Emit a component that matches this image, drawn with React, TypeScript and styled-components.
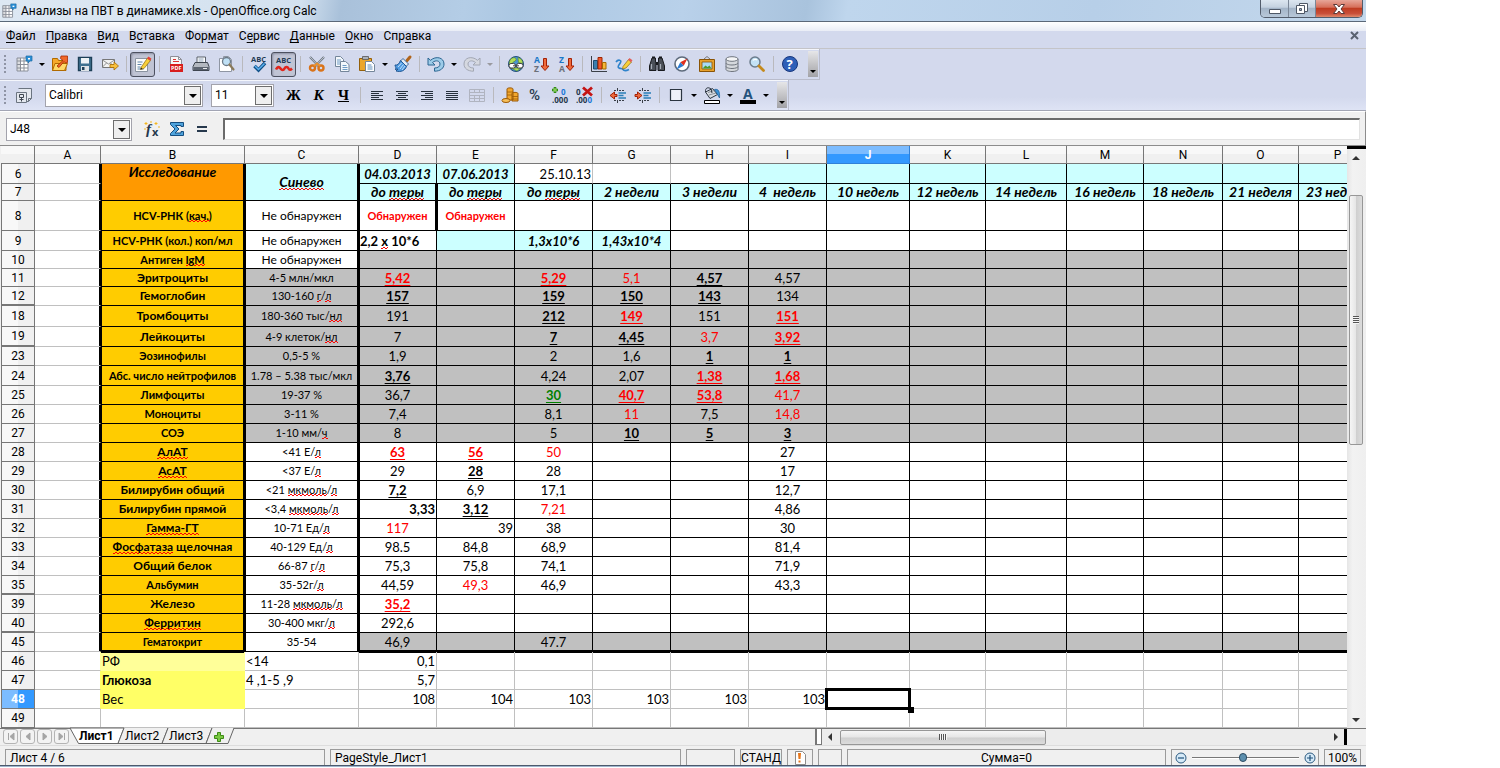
import React from "react";
import styled, { createGlobalStyle, css } from "styled-components";

const UI = `Roboto, "Open Sans", "Noto Sans", sans-serif`;
const SHEET = `Lato, "Open Sans", "Noto Sans", sans-serif`;

const GlobalStyle = createGlobalStyle`
  *, *::before, *::after { box-sizing: border-box; }
  body { margin: 0; background: #fff; overflow: hidden; }
  button, input, select { font: inherit; color: inherit; margin: 0; }
`;

/* ---------- window frame ---------- */

const Desktop = styled.div`
  padding-right: 134px;
  font: 12px/16px ${UI};
  color: #000;
`;

const Window = styled.main`
  display: flex;
  flex-direction: column;
  background: #f0f0f0;
`;

const TitleBar = styled.header`
  display: flex;
  align-items: flex-start;
  justify-content: space-between;
  height: 22px;
  padding-right: 3px;
  background: linear-gradient(100deg, #dde8f3 0%, #d3e1ef 22%, #a9c1da 25%, #b4cde6 34%, #abc7e2 38%, #b9d1ea 50%, #a9c3dd 59%, #bfd6ed 62%, #b7cfe8 80%, #c4d8ec 100%);
  border-bottom: 1px solid #5b6878;
`;

const TitleText = styled.h1`
  display: flex;
  align-items: center;
  gap: 4px;
  margin: 0;
  padding: 0 1px;
  height: 21px;
  font: 12px/20px ${UI};
`;

const Controls = styled.div`
  display: flex;
  height: 18px;
  border: 1px solid #525c6b;
  border-top: 0;
  border-radius: 0 0 5px 5px;
  overflow: hidden;
`;

const ControlButton = styled.button<{ $close?: boolean }>`
  display: flex;
  align-items: center;
  justify-content: center;
  width: ${(p) => (p.$close ? 47 : 27)}px;
  padding: 0;
  border: 0;
  border-left: 1px solid #7b8797;
  background: ${(p) =>
    p.$close
      ? "linear-gradient(#e7a699 0%, #d6705b 42%, #bf3c22 50%, #c9503a 80%, #e08a6c 100%)"
      : "linear-gradient(#dce6f0 0%, #c5d2e0 42%, #a4b5c8 50%, #b8c8d9 100%)"};
  &:first-child { border-left: 0; }
`;

const MenuBar = styled.nav`
  display: flex;
  align-items: center;
  gap: 10px;
  height: 27px;
  padding: 1px 7px 0 6px;
  background: linear-gradient(#fff 0, #e9edf6 9px, #d3d9ed 9px);
  border-bottom: 1px solid #c4c4c8;
`;

const MenuItem = styled.button`
  padding: 0;
  border: 0;
  background: none;
  line-height: 16px;
  u {
    text-underline-offset: 2px;
    text-decoration-skip-ink: none;
  }
`;

const CloseDoc = styled.button`
  display: flex;
  margin-left: auto;
  padding: 0;
  border: 0;
  background: none;
`;

/* ---------- toolbars ---------- */

const ToolArea = styled.div`
  background: linear-gradient(#d3d9ed 0, #d3d9ed 48px, #dfe4f5 62px);
  border-bottom: 1px solid #a2a5b4;
`;

const ToolRow = styled.div`
  display: flex;
  align-items: center;
  width: fit-content;
  height: 31px;
  padding: 0 1px 0 0;
  border-bottom: 1px solid #b9bccb;
  border-right: 1px solid #b9bccb;
  box-shadow: inset 0 1px #f4f6fc;
  &:last-child { border-bottom: 0; height: 30px; }
`;

const Grip = styled.span`
  width: 11px;
  height: 19px;
  background: radial-gradient(circle at 1px 1px, #8f94a5 1px, transparent 1px) 4px 0 / 8px 4px repeat-y;
`;

const ToolButton = styled.button<{ $on?: boolean }>`
  display: flex;
  align-items: center;
  justify-content: center;
  width: 25px;
  height: 25px;
  padding: 0;
  border: 1px solid transparent;
  background: none;
  svg { overflow: visible; }
  ${(p) =>
    p.$on &&
    css`
      border: 1px solid #4d5160;
      border-radius: 3px;
      background: #c0c4d4;
      box-shadow: inset 1px 1px 2px #8d92a5;
    `}
`;

const Drop = styled.button<{ $off?: boolean }>`
  display: flex;
  align-items: center;
  justify-content: center;
  width: 11px;
  height: 25px;
  padding: 0;
  border: 0;
  background: none;
  &::after {
    content: "";
    border: 3px solid transparent;
    border-top-color: ${(p) => (p.$off ? "#9a9a9f" : "#000")};
    border-bottom: 0;
  }
`;

const Sep = styled.span`
  width: 8px;
  height: 16px;
  background: linear-gradient(#b9b9bd, #b9b9bd) center / 1px 100% no-repeat;
`;

const Overflow = styled.button`
  display: flex;
  align-items: flex-end;
  justify-content: center;
  width: 10px;
  height: 26px;
  margin-left: 6px;
  padding: 0 0 4px;
  border: 0;
  background: linear-gradient(#e6e6e8, #a2a2a6);
  &::after {
    content: "";
    border: 3px solid transparent;
    border-top-color: #000;
    border-bottom: 0;
  }
`;

const FormatGroup = styled.div`
  display: flex;
  align-items: center;
  margin-left: 7px;
`;

const Combo = styled.label<{ $w: number; $gap?: number }>`
  display: flex;
  position: relative;
  width: ${(p) => p.$w}px;
  height: 23px;
  margin-left: ${(p) => p.$gap ?? 0}px;
  border: 1px solid #a3a3ac;
  background: #fff;
  &::before {
    content: "";
    position: absolute;
    right: 1px;
    top: 1px;
    width: 17px;
    height: 19px;
    border: 1px solid #6e6e6e;
    background: #efefef;
    pointer-events: none;
  }
  &::after {
    content: "";
    position: absolute;
    right: 5px;
    top: 9px;
    border: 4px solid transparent;
    border-top-color: #000;
    border-bottom: 0;
    pointer-events: none;
  }
`;

const ComboSelect = styled.select`
  width: 100%;
  padding: 0 3px;
  border: 0;
  background: none;
  appearance: none;
`;

const Letter = styled.span<{ $italic?: boolean; $line?: boolean }>`
  font: ${(p) => (p.$italic ? "italic " : "")}bold 15px/18px "Liberation Serif", serif;
  ${(p) => p.$line && "text-decoration: underline;"}
`;

/* ---------- formula bar ---------- */

const FormulaBar = styled.div`
  display: flex;
  align-items: center;
  height: 34px;
  padding: 1px 5px 0 6px;
  border-top: 1px solid #fff;
  border-right: 1px solid #8c8c8c;
  background: #f0f0f0;
`;

const FormulaTools = styled.div`
  display: flex;
  padding: 0 9px 0 7px;
`;

const FormulaInput = styled.input`
  flex: 1;
  min-width: 0;
  height: 22px;
  padding: 0 4px;
  border: 1px solid #e2e2e2;
  border-top: 2px solid #6b6b6b;
  border-left: 2px solid #6b6b6b;
  border-radius: 0;
  background: #fff;
`;

/* ---------- sheet ---------- */

const SheetArea = styled.section`
  display: flex;
  padding-left: 1px;
  border-top: 1px solid #8c8c8c;
`;

const Viewport = styled.div`
  flex: 1;
  min-width: 0;
  overflow: hidden;
  background: #fff;
`;

const Grid = styled.table`
  table-layout: fixed;
  width: 1376px;
  border-collapse: separate;
  border-spacing: 0;
  font: 13px/16px ${SHEET};
`;

const ColHead = styled.th<{ $active?: boolean }>`
  height: 18px;
  padding: 1px 0 0;
  border-right: 1px solid ${(p) => (p.$active ? "#2f80d8" : "#777")};
  border-bottom: 1px solid ${(p) => (p.$active ? "#2f80d8" : "#777")};
  background: ${(p) =>
    p.$active ? "linear-gradient(#7cbcff 50%, #3399ff 50%)" : "linear-gradient(#f8f8f8 50%, #f0f0f0 50%)"};
  color: ${(p) => (p.$active ? "#fff" : "#000")};
  font: ${(p) => (p.$active ? 700 : 400)} 12px/16px ${UI};
`;

const RowHead = styled.th<{ $active?: boolean; $gap?: boolean }>`
  padding: 0;
  border-left: 1px solid #777;
  border-right: 1px solid #777;
  border-bottom: ${(p) => (p.$gap ? 2 : 1)}px solid #777;
  background: ${(p) =>
    p.$active
      ? "linear-gradient(90deg, #7cbcff 50%, #3399ff 50%)"
      : "linear-gradient(90deg, #f8f8f8 50%, #f0f0f0 50%)"};
  color: ${(p) => (p.$active ? "#fff" : "#000")};
  font: ${(p) => (p.$active ? 700 : 400)} 12px/16px ${UI};
`;

const insets: Record<string, string> = {
  t: "inset 0 1px #000",
  r: "inset -1px 0 #000",
  b: "inset 0 -1px #000",
  l: "inset 1px 0 #000",
};

interface CellProps {
  $bg?: string;
  $right?: string;
  $bottom?: string;
  $thick?: string;
  $align?: string;
  $size?: number;
  $color?: string;
  $bold?: boolean;
  $italic?: boolean;
  $under?: boolean;
  $top?: boolean;
}

const Cell = styled.td<CellProps>`
  padding: 0 1px;
  overflow: hidden;
  white-space: pre;
  vertical-align: ${(p) => (p.$top ? "top" : "middle")};
  text-align: ${(p) => p.$align ?? "center"};
  border-right: 1px solid ${(p) => p.$right ?? "#c0c0c0"};
  border-bottom: 1px solid ${(p) => p.$bottom ?? "#c0c0c0"};
  background: ${(p) => p.$bg ?? "#fff"};
  color: ${(p) => p.$color ?? "#000"};
  font-size: ${(p) => p.$size ?? 13}px;
  font-weight: ${(p) => (p.$bold ? 700 : 400)};
  font-style: ${(p) => (p.$italic ? "italic" : "normal")};
  ${(p) => p.$under && "text-decoration: underline; text-underline-offset: 2px; text-decoration-skip-ink: none;"}
  ${(p) => p.$thick && `box-shadow: ${p.$thick.split("").map((k) => insets[k]).join(", ")};`}
`;

const ActiveCell = styled(Cell)`
  position: relative;
  overflow: visible;
`;

const Cursor = styled.span`
  position: absolute;
  inset: -2px;
  border: 3px solid #000;
  &::after {
    content: "";
    position: absolute;
    right: -6px;
    bottom: -6px;
    width: 6px;
    height: 6px;
    background: #000;
  }
`;

const Misspelt = styled.span`
  background:
    linear-gradient(90deg, #f00 50%, transparent 50%) 0 100% / 4px 1px repeat-x,
    linear-gradient(90deg, transparent 50%, #f00 50%) 0 calc(100% - 1px) / 4px 1px repeat-x;
`;

/* ---------- scroll bars, tabs, status ---------- */

const VScroll = styled.div`
  display: flex;
  flex-direction: column;
  align-items: center;
  width: 19px;
  padding: 0 1px 0 0;
  border-top: 3px solid #000;
  background: linear-gradient(90deg, #e6e6e6, #f2f2f2 30%, #efefef);
`;

const ScrollArrow = styled.button<{ $dir: "up" | "down" | "left" | "right" }>`
  display: flex;
  align-items: center;
  justify-content: center;
  width: 16px;
  height: 17px;
  padding: 0;
  border: 0;
  background: none;
  &::after {
    content: "";
    border: 4px solid transparent;
    ${(p) => p.$dir === "up" && "border-bottom-color: #333; border-top: 0;"}
    ${(p) => p.$dir === "down" && "border-top-color: #333; border-bottom: 0;"}
    ${(p) => p.$dir === "left" && "border-right-color: #333; border-left: 0;"}
    ${(p) => p.$dir === "right" && "border-left-color: #333; border-right: 0;"}
  }
`;

const VTrack = styled.div`
  flex: 1;
  width: 14px;
  padding-top: 29px;
`;

const Thumb = styled.div<{ $v?: boolean }>`
  display: flex;
  align-items: center;
  justify-content: center;
  width: ${(p) => (p.$v ? "14px" : "206px")};
  height: ${(p) => (p.$v ? "250px" : "15px")};
  border: 1px solid #979797;
  border-radius: 2px;
  background: linear-gradient(${(p) => (p.$v ? "90deg" : "180deg")}, #f5f5f5, #e6e6e6 48%, #cfcfcf 52%, #dcdcdc);
  &::after {
    content: "";
    width: ${(p) => (p.$v ? 6 : 8)}px;
    height: ${(p) => (p.$v ? 8 : 6)}px;
    background: repeating-linear-gradient(${(p) => (p.$v ? "180deg" : "90deg")}, #555 0 1px, #f5f5f5 1px 2px);
  }
`;

const TabBar = styled.div`
  display: flex;
  height: 18px;
  padding-right: 19px;
  border-top: 1px solid #777;
  border-bottom: 1px solid #ddd;
`;

const TabZone = styled.div`
  display: flex;
  align-items: flex-start;
  width: 815px;
  padding-left: 3px;
`;

const NavButton = styled.button`
  display: flex;
  align-items: center;
  justify-content: center;
  width: 15px;
  height: 15px;
  margin-right: 2px;
  padding: 0;
  border: 1px solid #b4b4b4;
  border-radius: 3px;
  background: #f3f3f3;
`;

const Tabs = styled.div`
  display: flex;
  padding-left: 1px;
`;

const Tab = styled.button<{ $active?: boolean; $w: number }>`
  position: relative;
  width: ${(p) => p.$w}px;
  height: 16px;
  padding: 0 0 1px 7px;
  border: 0;
  background: none;
  text-align: left;
  font: ${(p) => (p.$active ? 700 : 400)} 12px/15px ${UI};
`;

const TabShape = styled.svg`
  position: absolute;
  left: 0;
  top: -1px;
  overflow: visible;
`;

const TabLabel = styled.span`
  display: flex;
  align-items: center;
  position: relative;
  height: 15px;
`;

const Splitter = styled.div`
  width: 7px;
  border: 1px solid #777;
  border-top: 0;
  border-left-width: 2px;
  background: #fff;
`;

const HScroll = styled.div`
  display: flex;
  flex: 1;
  align-items: center;
  border-right: 3px solid #000;
  background: #ececec;
`;

const HTrack = styled.div`
  flex: 1;
  padding-left: 2px;
`;

const StatusBar = styled.footer`
  display: flex;
  gap: 5px;
  height: 20px;
  padding: 3px 5px 0;
  border-bottom: 1px solid #4c5a6c;
`;

const StatusCell = styled.div<{ $w?: number; $pad?: number }>`
  display: flex;
  align-items: center;
  justify-content: ${(p) => (p.$pad ? "flex-start" : "center")};
  ${(p) => (p.$w ? `flex: none; width: ${p.$w}px;` : "flex: 1; min-width: 0;")}
  padding-left: ${(p) => p.$pad ?? 0}px;
  border: 1px solid #9b9b9b;
  border-bottom: 0;
  white-space: nowrap;
`;

const ZoomButton = styled.button`
  display: flex;
  padding: 0;
  border: 0;
  background: none;
`;

const ZoomRange = styled.input`
  width: 107px;
  height: 14px;
  margin: 0 5px;
  appearance: none;
  background: linear-gradient(#777 50%, #fff 50%) center / 100% 2px no-repeat;
  &::-webkit-slider-thumb {
    appearance: none;
    width: 8px;
    height: 9px;
    border: 1px solid #2a4a62;
    border-radius: 4px;
    background: #5c8fae;
  }
`;

const TaskbarEdge = styled.div`
  height: 1px;
  background: #9fb4cc;
`;

/* ---------- icons ---------- */

const icon = (children: React.ReactNode, size = 18) => (
  <svg width={size} height={size} viewBox="0 0 18 18" fill="none" aria-hidden="true">
    {children}
  </svg>
);
const iconFont = { fontFamily: "Open Sans, sans-serif", fontWeight: 700 } as const;

const SheetArt = (
  <>
    <path d="M2 3h11v13H2z" fill="#fff" stroke="#8a8f99" />
    <path d="M2 6h11M2 9.500h11M2 13h11M5.500 3v13M9 3v13" stroke="#8a8f99" />
    <path d="M2 3h4v13H2z" fill="#8a8f99" fillOpacity=".3" />
    <path d="M11 1h6v5h-2l-2 2V6h-2z" fill="#2b8fd6" stroke="#1d6ba5" strokeWidth=".7" />
    <path d="M13 3h2v1.500h-2z" fill="#fff" />
  </>
);
const SheetIcon = icon(SheetArt);
const OpenIcon = icon(
  <>
    <path d="M1.500 15.500v-12h5l1 2H15v10z" fill="#f7a92b" stroke="#b06a00" />
    <path d="M1.500 15.500 4 8.500h12.500l-3 7z" fill="#ffd968" stroke="#b06a00" />
    <path d="M6 11 12 5.500 9.500 3.500 10 1h6.500v6.500l-2 .5-1.500-1.500L8 12.500z" fill="#f0682a" stroke="#a82a00" strokeWidth=".8" />
  </>
);
const SaveIcon = icon(
  <>
    <path d="M2.500 2.500h13v13h-13z" fill="#3f718f" stroke="#1d3f57" strokeWidth="1.400" />
    <path d="M5 3h8v5.500H5z" fill="#eef3f6" />
    <path d="M5 11h8v5H5z" fill="#dfe4e8" />
    <path d="M6 12h2.500v3H6z" fill="#1d3f57" />
  </>
);
const MailIcon = icon(
  <>
    <path d="M1.500 4.500h12v8h-12z" fill="#f3f3f3" stroke="#777" />
    <path d="m1.500 5 6 4 6-4M1.500 12l4-4M13.500 12l-4-4" stroke="#777" strokeWidth=".8" />
    <path d="M9 9.500h4V7l4.500 4-4.500 4v-2.500H9z" fill="#f9c03c" stroke="#a66a00" strokeWidth=".8" />
  </>
);
const EditIcon = icon(
  <>
    <path d="M1.500 3.500h12v13h-12z" fill="#fbfbfb" stroke="#8a93a0" />
    <path d="M3.500 7h5M3.500 9.500h4M3.500 12h3M3.500 14h6" stroke="#5c84a8" />
    <path d="M7 12.500 13.500 3l3 2.500-6.500 8-3.500 1z" fill="#f8cf3a" stroke="#8a6a10" strokeWidth=".7" />
    <path d="m13 3.500 1.500-2 3 2.200-1.400 2z" fill="#e2403a" />
    <path d="m6.600 14.400.4-1.800 1.600 1.200z" fill="#222" />
  </>
);
const PdfIcon = icon(
  <>
    <path d="M3.500 1.500h8l3 3v12h-11z" fill="#f8f8f8" stroke="#8f8f96" />
    <path d="M11.500 1.500v3h3" stroke="#8f8f96" />
    <path d="M6 4.500h3M6 6.500h6" stroke="#d33" />
    <path d="M3 9h13v8H3z" fill="#d81e1e" />
    <text x="4" y="15" fontSize="5.500" fill="#fff" {...iconFont}>PDF</text>
  </>
);
const PrintIcon = icon(
  <>
    <path d="M5 8V2h8.500v6z" fill="#fff" stroke="#59606b" />
    <path d="M6.500 4h5M6.500 6h5" stroke="#8fa3b8" />
    <path d="M3 7.500h12.500l1.500 4v4H1v-4z" fill="#b3b8c0" stroke="#3f4650" />
    <path d="M1.500 12h15v3h-15z" fill="#5c6470" />
    <path d="M11 13.500h4" stroke="#e8eaed" />
  </>
);
const PreviewIcon = icon(
  <>
    <path d="M2.500 3.500h4v-2h5l3 3v12h-12z" fill="#fff" stroke="#8f96a3" />
    <circle cx="9.500" cy="6.500" r="4" fill="#bfe0f5" stroke="#6c7a88" strokeWidth="1.300" />
    <path d="m12.500 9.500 4 5" stroke="#8a7a5a" strokeWidth="2.200" strokeLinecap="round" />
  </>
);
const AbcText = <text x="1" y="7" fontSize="7.500" fill="#243b55" {...iconFont}>ABC</text>;
const SpellIcon = icon(
  <>
    {AbcText}
    <path d="m4.500 11 4 4 6.500-7" stroke="#0f4f86" strokeWidth="3.500" />
    <path d="m5 11 3.500 3.500L14.500 8.500" stroke="#5bb0ee" strokeWidth="1.500" />
  </>
);
const AutoSpellIcon = icon(
  <>
    <g transform="translate(0 1)">{AbcText}</g>
    <path d="M1 14.500c1.500-3 3-3 4.500-1s3 2 4 0 3-2 4 0 2 1.500 3.500 0" stroke="#e0261c" strokeWidth="2.600" />
  </>
);
const CutIcon = icon(
  <>
    <path d="m2 2 9.500 10M16 2 6.500 12" stroke="#6b7480" strokeWidth="2.200" />
    <path d="m2 2 9 9.500M16 2 7 11.500" stroke="#d5dae0" strokeWidth=".8" />
    <circle cx="4.500" cy="13" r="2.500" stroke="#d9731a" strokeWidth="2.400" />
    <circle cx="13" cy="13" r="2.500" stroke="#d9731a" strokeWidth="2.400" />
    <path d="m6 11 3-2.500 3 2.500" stroke="#e8902e" strokeWidth="2" />
  </>
);
const CopyIcon = icon(
  <>
    <path d="M2.500 1.500h5l3 3v7h-8z" fill="#f4f8fc" stroke="#74869a" />
    <path d="M4 5h4M4 7h3M4 9h3" stroke="#6f9cc4" />
    <path d="M7.500 6.500h5l3.500 3v7H7.500z" fill="#f4f8fc" stroke="#74869a" />
    <path d="M9.500 10.500h4M9.500 12.500h5M9.500 14.500h5" stroke="#6f9cc4" />
  </>
);
const PasteIcon = icon(
  <>
    <path d="M1.500 3.500h12v12h-12z" fill="#eba62c" stroke="#94600a" />
    <path d="M4.500 1.500h6v3h-6z" fill="#aab1ba" stroke="#555" strokeWidth=".8" />
    <path d="M7.500 6.500h6l3 3v7h-9z" fill="#fff" stroke="#74869a" />
    <path d="M9.500 10h4M9.500 12h5M9.500 14h5" stroke="#5c8dbc" />
  </>
);
const BrushIcon = icon(
  <>
    <path d="m16 2-3 3.500" stroke="#b0641a" strokeWidth="3" strokeLinecap="round" />
    <path d="m9 3.500 5.500 5.500-2.500 2.500L6.500 6z" fill="#e4ebf3" stroke="#2c5a8c" strokeWidth=".9" />
    <path d="M6.500 5.500 12.500 11.500C11 15.500 7 17.500 2 16l2-2-3 .5c2-1.500 0-2.500 0-4.500 2.500.5 4-1 5.500-4.500z" fill="#4f9ae0" stroke="#174f8c" strokeWidth=".9" />
    <path d="M7.500 8 4 12M9.500 9.500 6 14M11 11l-3 4" stroke="#cfe6fa" strokeWidth=".9" />
  </>
);
const undoPath = "M1 3v7h7L5.500 7.500C9 4.500 13 6 13 9c0 2.500-2 4-5.500 4v3.200c6 0 9.500-3 9.500-7.200C17 2.500 9 .5 3.500 5.300z";
const UndoIcon = icon(<path d={undoPath} fill="#9ccbe8" stroke="#2a6591" />);
const RedoIcon = icon(
  <g transform="matrix(-1 0 0 1 18 0)">
    <path d={undoPath} fill="#d5d8e0" stroke="#a2a7b3" />
  </g>
);
const GlobeIcon = icon(
  <>
    <circle cx="9" cy="9" r="7.500" fill="#4b93d1" stroke="#264f7c" />
    <path d="M3 5c3-4 7-2 6 0s-3 1-4 4-2 1-3 0zM11 2.500c3 1 5 3 4.500 6l-4-1zM4 13h10l-4 3z" fill="#b4dc5a" stroke="#3f7a1d" strokeWidth=".5" />
    <rect x="2" y="8.500" width="6.500" height="4.500" rx="2" fill="#fff" stroke="#444" />
    <rect x="9.500" y="8.500" width="6.500" height="4.500" rx="2" fill="#fff" stroke="#444" />
    <path d="M6 10.800h6" stroke="#444" />
  </>
);
const sortIcon = (a: string, b: string) =>
  icon(
    <>
      <text x="2" y="8" fontSize="8.500" fill="#1a78c8" {...iconFont}>{a}</text>
      <text x="2" y="17" fontSize="8.500" fill="#6c7079" {...iconFont}>{b}</text>
      <path d="M11.500 3.500h3V11H17l-4 4.500L9 11h2.500z" fill="#ee6a3c" stroke="#a32106" />
    </>
  );
const ChartIcon = icon(
  <>
    <path d="M1.500 1v15.500H17" stroke="#3a3f48" />
    <path d="M3.500 5.500h4V14h-4z" fill="#3b7fae" stroke="#1b4d73" />
    <path d="M8 2.500h4V14H8z" fill="#f0582a" stroke="#9d2400" />
    <path d="M12.500 7.500h3.500V14h-3.500z" fill="#f7b63a" stroke="#a66a00" />
  </>
);
const DrawIcon = icon(
  <>
    <path d="M1 7c2-3 6-2 4.500.5S2 12 4 13s3 0 4 1.500 4 1 6 0" stroke="#2e83cc" strokeWidth="1.600" />
    <path d="M8 11.500 13.500 4.500l3 2.500-5.500 6-3.500 1z" fill="#f8cf3a" stroke="#8a6a10" strokeWidth=".7" />
    <path d="m13 5 1.500-2 3 2.200-1.400 2z" fill="#e2605a" />
  </>
);
const FindIcon = icon(
  <>
    <path d="M4 3h3.500v3L8 9v6.500H1.500V11zM14 3h-3.500v3L10 9v6.500h6.500V11z" fill="#4a4f58" stroke="#17191d" />
    <path d="M4 1.500h3V3H4zM11 1.500h3V3h-3zM8 7h2v3H8z" fill="#17191d" />
    <path d="M3.500 9v5M12.500 9v5" stroke="#a7adb8" strokeWidth="1.200" />
  </>
);
const CompassIcon = icon(
  <>
    <circle cx="9" cy="9" r="7" fill="#fff" stroke="#5e6b7c" strokeWidth="1.600" />
    <path d="m14.500 3.500-3.800 7.200-3.400-3.400z" fill="#e0301e" />
    <path d="m3.500 14.500 7.200-3.800-3.400-3.400z" fill="#2b7ad0" />
  </>
);
const GalleryIcon = icon(
  <>
    <path d="m6 4 3-2.500L12 4" stroke="#777" />
    <path d="M1.500 4.500h15v12h-15z" fill="#e7a12c" stroke="#8a5406" />
    <path d="M4 7h10v7H4z" fill="#a8daf5" stroke="#8a5406" strokeWidth=".8" />
    <path d="m4.500 13.500 3-3 2 1.500 2-1.500 2 3z" fill="#4c9a2a" />
  </>
);
const DatabaseIcon = icon(
  <>
    <path d="M3 4v10.500c0 1 2.700 2 6 2s6-1 6-2V4z" fill="#d6d9dd" stroke="#6f757e" />
    <ellipse cx="9" cy="4" rx="6" ry="2.300" fill="#f4f5f6" stroke="#6f757e" />
    <path d="M3 8c0 1 2.700 2 6 2s6-1 6-2M3 11.500c0 1 2.700 2 6 2s6-1 6-2" stroke="#6f757e" />
  </>
);
const LensIcon = icon(
  <>
    <circle cx="7" cy="7" r="5" fill="#c3e2f5" stroke="#6b7c8c" strokeWidth="1.500" />
    <path d="M5 5.500c1-1.500 3-1.500 4-.5" stroke="#fff" strokeWidth="1.200" />
    <path d="m11 11 4.500 4.500" stroke="#c48a1c" strokeWidth="2.800" strokeLinecap="round" />
  </>
);
const HelpIcon = icon(
  <>
    <circle cx="9" cy="9" r="7.500" fill="#2e5fb8" stroke="#17367c" />
    <text x="5.500" y="14" fontSize="13" fill="#fff" {...iconFont}>?</text>
  </>
);
const StylesIcon = icon(
  <>
    <path d="M3.500 2.500h13v10l-3 3h-4" fill="#e4e8ef" stroke="#6b7480" />
    <path d="M16.500 12.500h-3v3" stroke="#6b7480" />
    <path d="M1.500 6.500h10v10h-10z" fill="#e4e8ef" stroke="#6b7480" />
    <path d="M4.500 8.500h4v3h-4zM6.500 11.500v4M4.500 13.500h4" stroke="#3f4650" />
  </>
);
const linesIcon = (rows: [number, number][]) =>
  icon(
    <g stroke="#26303c">
      {rows.map(([a, b], i) => (
        <path key={i} d={`M${a} ${5.5 + i * 2}H${b}`} />
      ))}
    </g>
  );
const AlignLeft = linesIcon([[3, 15], [3, 11], [3, 15], [3, 11], [3, 15]]);
const AlignCenter = linesIcon([[3, 15], [5, 13], [3, 15], [5, 13], [3, 15]]);
const AlignRight = linesIcon([[3, 15], [7, 15], [3, 15], [7, 15], [3, 15]]);
const AlignJustify = linesIcon([[3, 15], [3, 15], [3, 15], [3, 15], [3, 15]]);
const MergeIcon = icon(
  <path d="M1.500 3.500h15v12h-15zM1.500 6.500h15M1.500 9.500h15M1.500 12.500h15M6.500 3.500v3M11.500 3.500v3M6.500 9.500v6M11.500 9.500v6" stroke="#b0b4c0" />
);
const CoinsIcon = icon(
  <>
    <path d="M6 3c0-1.500 6-1.500 6 0v11H6zM11 7.500c0-1.500 6-1.500 6 0V15h-6z" fill="#f2a72e" stroke="#9c5a06" />
    <path d="M6 6h6M6 9h5M11 10.500h6M11 13h6" stroke="#9c5a06" strokeWidth=".8" />
    <ellipse cx="5" cy="14.500" rx="4" ry="2" fill="#f7c05a" stroke="#9c5a06" />
  </>
);
const PercentIcon = icon(
  <text x="3" y="14" fontSize="15" fill="#26384c" fontFamily="Roboto, sans-serif" fontWeight={500}>%</text>
);
const AddDecimalIcon = icon(
  <>
    <path d="M4 1v6M1 4h6" stroke="#2f8a14" strokeWidth="2.600" />
    <path d="M4 2v4M2 4h4" stroke="#a4e36c" strokeWidth="1" />
    <text x="10" y="9" fontSize="8" fill="#1a78d8" {...iconFont}>0</text>
    <text x="1" y="17" fontSize="8" fill="#26384c" {...iconFont}>.000</text>
  </>
);
const DelDecimalIcon = icon(
  <>
    <text x="0" y="9" fontSize="8" fill="#26384c" {...iconFont}>0</text>
    <text x="0" y="17" fontSize="8" fill="#26384c" {...iconFont}>.00<tspan fill="#1a78d8">0</tspan></text>
    <path d="m7 1.500 9 8M16 1.500l-9 8" stroke="#c41414" strokeWidth="2.800" />
  </>
);
const indentIcon = (flip: boolean) =>
  icon(
    <>
      <path d="M5 4.500h3M10 4.500h6M5 14.500h3M10 14.500h6" stroke="#3a3f48" strokeDasharray="2 1" />
      <path d="M9.500 7h7.500M9.500 9.500h5M9.500 12h7.500" stroke="#2a7fb8" strokeWidth="1.500" />
      <path d="M8.500 2v3M8.500 14v3" stroke="#3a3f48" />
      <path
        d={flip ? "M1 8.500h2.500V6L8 9.500l-4.500 3.500v-2.500H1z" : "M8 8.500H5.500V6L1 9.500l4.500 3.500v-2.500H8z"}
        fill="#ee6a3c"
        stroke="#a32106"
      />
    </>
  );
const BorderIcon = icon(<path d="M3.500 3.500h11v11h-11z" fill="#eef1f8" stroke="#2b3540" strokeWidth="1.200" />);
const FillIcon = icon(
  <>
    <path d="m2.500 6 7-3.500 5 6L7 12.500z" fill="#d9dde2" stroke="#2b3540" />
    <path d="m5 6.500 6-2M6 9l7-2" stroke="#8b929b" />
    <path d="M2.500 6C2 2 5 .5 8 3l1 4" stroke="#2b3540" />
    <path d="M11.500 3.500c4-1 5.500 2 5 8.500l-2-3.500z" fill="#3b93d8" stroke="#1c5c94" strokeWidth=".7" />
    <path d="M1.500 14.500h15v3h-15z" fill="#fff" stroke="#000" />
  </>
);
const FontColorIcon = icon(
  <>
    <text x="4" y="13" fontSize="14" fill="#24527c" {...iconFont}>A</text>
    <path d="M1 14h16v4H1z" fill="#000" />
  </>
);
const FxIcon = icon(
  <>
    <text x="3" y="14" fontSize="15" fill="#26384c" fontFamily="Liberation Serif, serif" fontStyle="italic" fontWeight={700}>f</text>
    <text x="9" y="16" fontSize="11" fill="#26384c" {...iconFont}>x</text>
    <path d="M3 2v3M1.500 3.500h3M8 1v2M13 2v3M11.500 3.500h3M2 8v2M16 6v2" stroke="#f5b820" />
  </>
);
const SumIcon = icon(
  <path d="M2.500 2.500h13v4h-2.500V5.500H7.500L11 9l-4 4h6v-1.500h2.500v4h-13v-2L7 9 2.500 4.500z" fill="#4fa3dc" stroke="#154e80" />
);
const EqualsIcon = icon(<path d="M4 7h10M4 11h10" stroke="#26384c" strokeWidth="2" />);

/* ---------- sheet data ---------- */

const CYAN = "#ccffff";
const GREY = "#c0c0c0";
const columns: [string, number][] = [
  ["A", 66], ["B", 144], ["C", 114], ["D", 78], ["E", 78], ["F", 78], ["G", 78], ["H", 78],
  ["I", 78], ["J", 83], ["K", 76], ["L", 81], ["M", 77], ["N", 79], ["O", 76], ["P", 78],
];

/* A value is "text" or "text|flags": b bold, u underline, i italic, r red, g green, R right, L left, s small, m medium.
   Words between ~ marks carry the spelling wave. */
interface Row {
  n: number;
  h: number;
  label: string;
  norm: string;
  vals: string[];
  small?: boolean;
  bg?: string;
  normBg?: string;
  gap?: boolean;
}

const ROWS: Row[] = [
  { n: 6, h: 20, label: "", norm: "", vals: ["04.03.2013|bi", "07.06.2013|bi", "25.10.13|R"] },
  {
    n: 7, h: 17, label: "", norm: "", bg: CYAN,
    vals: ["до ~теры~|bim", "до ~теры~|bim", "до ~теры~|bim", "2 недели|bim", "3 недели|bim", "4  недель|bim", "10 недель|bim",
      "12 недель|bim", "14 недель|bim", "16 недель|bim", "18 недель|bim", "21 неделя|bim", "23 неделя|bim"],
  },
  { n: 8, h: 30, label: "HCV-РНК (~кач.~)", norm: "Не обнаружен", vals: ["Обнаружен|brs", "Обнаружен|brs"], small: true },
  { n: 9, h: 20, label: "HCV-РНК (кол.) коп/мл", norm: "Не обнаружен", vals: ["2,2 ~x~ 10*6|bL", "", "1,3x10*6|bi", "1,43x10*4|bi"], small: true },
  { n: 10, h: 18, label: "Антиген ~IgM~", norm: "Не обнаружен", vals: [], bg: GREY, small: true },
  { n: 11, h: 18, label: "Эритроциты", norm: "4-5 млн/мкл", vals: ["5,42|bur", "", "5,29|bur", "5,1|r", "4,57|bu", "4,57"], bg: GREY, normBg: GREY },
  { n: 12, h: 19, label: "Гемоглобин", norm: "130-160 ~г~/~л~", vals: ["157|bu", "", "159|bu", "150|bu", "143|bu", "134"], bg: GREY, normBg: GREY, gap: true },
  { n: 18, h: 21, label: "Тромбоциты", norm: "180-360 тыс/~нл~", vals: ["191", "", "212|bu", "149|bur", "151", "151|bur"], bg: GREY, normBg: GREY },
  { n: 19, h: 20, label: "Лейкоциты", norm: "4-9 клеток/~нл~", vals: ["7", "", "7|bu", "4,45|bu", "3,7|r", "3,92|bur"], bg: GREY, normBg: GREY, gap: true },
  { n: 23, h: 19, label: "Эозинофилы", norm: "0,5-5 %", vals: ["1,9", "", "2", "1,6", "1|bu", "1|bu"], bg: GREY, normBg: GREY, small: true },
  { n: 24, h: 20, label: "Абс. число нейтрофилов", norm: "1.78 – 5.38 тыс/мкл", vals: ["3,76|bu", "", "4,24", "2,07", "1,38|bur", "1,68|bur"], bg: GREY, normBg: GREY, small: true },
  { n: 25, h: 19, label: "Лимфоциты", norm: "19-37 %", vals: ["36,7", "", "30|bug", "40,7|bur", "53,8|bur", "41,7|r"], bg: GREY, normBg: GREY, small: true },
  { n: 26, h: 19, label: "Моноциты", norm: "3-11 %", vals: ["7,4", "", "8,1", "11|r", "7,5", "14,8|r"], bg: GREY, normBg: GREY, small: true },
  { n: 27, h: 19, label: "СОЭ", norm: "1-10 мм/~ч~", vals: ["8", "", "5", "10|bu", "5|bu", "3|bu"], bg: GREY, normBg: GREY, small: true },
  { n: 28, h: 19, label: "~АлАТ~", norm: "<41 Е/~л~", vals: ["63|bur", "56|bur", "50|r", "", "", "27"] },
  { n: 29, h: 19, label: "~АсАТ~", norm: "<37 Е/~л~", vals: ["29", "28|bu", "28", "", "", "17"] },
  { n: 30, h: 19, label: "Билирубин общий", norm: "<21 ~мкмоль~/~л~", vals: ["7,2|bu", "6,9", "17,1", "", "", "12,7"] },
  { n: 31, h: 19, label: "Билирубин прямой", norm: "<3,4 ~мкмоль~/~л~", vals: ["3,33|bR", "3,12|bu", "7,21|r", "", "", "4,86"] },
  { n: 32, h: 19, label: "~Гамма-ГТ~", norm: "10-71 Ед/~л~", vals: ["117|r", "39|R", "38", "", "", "30"] },
  { n: 33, h: 19, label: "~Фосфатаза~ щелочная", norm: "40-129 Ед/~л~", vals: ["98.5", "84,8", "68,9", "", "", "81,4"] },
  { n: 34, h: 19, label: "Общий белок", norm: "66-87 ~г~/~л~", vals: ["75,3", "75,8", "74,1", "", "", "71,9"] },
  { n: 35, h: 19, label: "Альбумин", norm: "35-52г/~л~", vals: ["44,59", "49,3|r", "46,9", "", "", "43,3"], gap: true, small: true },
  { n: 39, h: 19, label: "Железо", norm: "11-28 ~мкмоль~/~л~", vals: ["35,2|bur"] },
  { n: 40, h: 19, label: "~Ферритин~", norm: "30-400 мкг/~л~", vals: ["292,6"], gap: true },
  { n: 45, h: 19, label: "Гематокрит", norm: "35-54", vals: ["46,9", "", "47.7"], bg: GREY, small: true },
];

const TAIL = [
  { n: 46, label: "РФ", norm: "<14", vals: ["0,1"], yellow: "#ffff99" },
  { n: 47, label: "Глюкоза", norm: "4 ,1-5 ,9", vals: ["5,7"], yellow: "#ffff66", bold: true },
  { n: 48, label: "Вес", norm: "", vals: ["108", "104", "103", "103", "103", "103"], yellow: "#ffff66" },
  { n: 49, label: "", norm: "", vals: [], yellow: undefined },
];

const valueColumns = columns.slice(3).map(([name]) => name);

const Spelled = ({ text }: { text: string }) => (
  <>{text.split("~").map((part, i) => (i % 2 ? <Misspelt key={i}>{part}</Misspelt> : part))}</>
);

const fillOf = (row: Row, i: number) => {
  if (row.n === 6) return i < 2 || i > 4 ? CYAN : "#fff";
  if (row.n === 9) return i >= 1 && i <= 3 ? CYAN : "#fff";
  return row.bg ?? "#fff";
};

const thickOf = (row: Row, i: number) => {
  let t = "";
  if (i === 0) t += "l";
  if (row.n === 7 || row.n === 8) {
    if (i === 0) t += "r";
    if (i === 1) t += "l";
  }
  if (row.n === 45) t += "b";
  return t;
};

const sizeOf = (flags: string) => (flags.includes("s") ? 11 : flags.includes("m") ? 14 : 13);

const DataRow = ({ row }: { row: Row }) => (
  <tr style={{ height: row.h }}>
    <RowHead scope="row" $gap={row.gap}>{row.n}</RowHead>
    <Cell $right="#000" $thick="r" />
    {row.n === 6 && (
      <>
        <Cell rowSpan={2} $bg="#ff9900" $right="#000" $bottom="#000" $thick="lr" $bold $italic $size={14} $top>
          Исследование
        </Cell>
        <Cell rowSpan={2} $bg={CYAN} $right="#000" $bottom="#000" $thick="lr" $bold $italic $size={14}>
          <Misspelt>Синево</Misspelt>
        </Cell>
      </>
    )}
    {row.n > 7 && (
      <>
        <Cell $bg="#ffcc00" $right="#000" $bottom="#000" $thick={row.n === 45 ? "lrb" : "lr"} $bold $size={row.small ? 11 : 12}>
          <Spelled text={row.label} />
        </Cell>
        <Cell $bg={row.normBg} $right="#000" $bottom="#000" $thick="lr" $size={row.n < 11 ? 12 : 11}>
          <Spelled text={row.norm} />
        </Cell>
      </>
    )}
    {valueColumns.map((name, i) => {
      const [text, flags = ""] = (row.vals[i] ?? "").split("|");
      return (
        <Cell
          key={name}
          $bg={fillOf(row, i)}
          $right={row.n === 6 && (i === 2 || i === 3) ? GREY : "#000"}
          $bottom="#000"
          $thick={thickOf(row, i)}
          $bold={flags.includes("b")}
          $italic={flags.includes("i")}
          $under={flags.includes("u")}
          $color={flags.includes("r") ? "#f00" : flags.includes("g") ? "#008000" : "#000"}
          $align={flags.includes("R") ? "right" : flags.includes("L") ? "left" : "center"}
          $size={sizeOf(flags)}
        >
          <Spelled text={text} />
        </Cell>
      );
    })}
  </tr>
);

const menus = ["_Файл", "_Правка", "_Вид", "В_ставка", "Фор_мат", "С_ервис", "_Данные", "_Окно", "Спр_авка"];

const MenuLabel = ({ text }: { text: string }) => {
  const at = text.indexOf("_");
  return (
    <MenuItem type="button">
      {text.slice(0, at)}
      <u>{text[at + 1]}</u>
      {text.slice(at + 2)}
    </MenuItem>
  );
};

type Tool = [string, React.ReactNode, boolean?] | "sep" | "drop" | "dropOff";

const ToolItems = ({ items }: { items: Tool[] }) => (
  <>
    {items.map((item, i) => {
      if (item === "sep") return <Sep key={i} />;
      if (item === "drop" || item === "dropOff")
        return <Drop key={i} type="button" aria-label="Список" $off={item === "dropOff"} />;
      return (
        <ToolButton key={i} type="button" aria-label={item[0]} $on={item[2]}>
          {item[1]}
        </ToolButton>
      );
    })}
  </>
);

const standardTools: Tool[] = [
  ["Создать", SheetIcon], "drop", ["Открыть", OpenIcon], ["Сохранить", SaveIcon], ["Отправить", MailIcon], "sep",
  ["Правка файла", EditIcon, true], "sep",
  ["PDF", PdfIcon], ["Печать", PrintIcon], ["Просмотр", PreviewIcon], "sep",
  ["Орфография", SpellIcon], ["Автопроверка", AutoSpellIcon, true], "sep",
  ["Вырезать", CutIcon], ["Копировать", CopyIcon], ["Вставить", PasteIcon], "drop", ["Формат по образцу", BrushIcon], "sep",
  ["Отменить", UndoIcon], "drop", ["Вернуть", RedoIcon], "dropOff", "sep",
  ["Гиперссылка", GlobeIcon], ["По возрастанию", sortIcon("A", "Z")], ["По убыванию", sortIcon("Z", "A")], "sep",
  ["Диаграмма", ChartIcon], ["Рисунок", DrawIcon], "sep",
  ["Найти", FindIcon], ["Навигатор", CompassIcon], ["Галерея", GalleryIcon], ["Источники данных", DatabaseIcon], ["Масштаб", LensIcon], "sep",
  ["Справка", HelpIcon],
];

const formatTools: Tool[] = [
  ["Полужирный", <Letter key="b">Ж</Letter>], ["Курсив", <Letter key="i" $italic>К</Letter>], ["Подчёркнутый", <Letter key="u" $line>Ч</Letter>], "sep",
  ["По левому краю", AlignLeft], ["По центру", AlignCenter], ["По правому краю", AlignRight], ["По ширине", AlignJustify], ["Объединить", MergeIcon], "sep",
  ["Денежный", CoinsIcon], ["Процент", PercentIcon], ["Добавить разряд", AddDecimalIcon], ["Удалить разряд", DelDecimalIcon], "sep",
  ["Уменьшить отступ", indentIcon(false)], ["Увеличить отступ", indentIcon(true)], "sep",
  ["Обрамление", BorderIcon], "drop", ["Цвет фона", FillIcon], "drop", ["Цвет символов", FontColorIcon], "drop",
];

const navPaths = ["M2.500 1v7M8 1 4 4.500 8 8z", "M7 1 3 4.500 7 8z", "M3 1l4 3.500L3 8z", "M2 1l4 3.500L2 8zM7.500 1v7"];
const navNames = ["Первый лист", "Предыдущий лист", "Следующий лист", "Последний лист"];

const SheetTab = ({ w, active, children, label }: { w: number; active?: boolean; children: React.ReactNode; label?: string }) => (
  <Tab type="button" $w={w} $active={active} aria-label={label}>
    <TabShape width={w + 6} height="17" aria-hidden="true">
      <path
        d={active ? `M-2 0 6.500 15.500H${w}L${w + 6} 0z` : `M6 0 0 15.500H${w}L${w + 6} 0`}
        fill={active ? "#fff" : "#f0f0f0"}
        stroke="#666"
      />
    </TabShape>
    <TabLabel>{children}</TabLabel>
  </Tab>
);

const zoomIcon = (plus: boolean) => (
  <svg width="12" height="12" viewBox="0 0 12 12" aria-hidden="true">
    <circle cx="6" cy="6" r="5" fill="#d5e9f7" stroke="#2c5a80" />
    <path d={plus ? "M3 6h6M6 3v6" : "M3 6h6"} stroke="#1d4f78" strokeWidth="1.200" />
  </svg>
);

export default function App() {
  return (
    <Desktop>
      <GlobalStyle />
      <Window>
        <TitleBar>
          <TitleText>
            {icon(SheetArt, 16)}
            Анализы на ПВТ в динамике.xls - OpenOffice.org Calc
          </TitleText>
          <Controls>
            <ControlButton type="button" aria-label="Свернуть">
              <svg width="14" height="12"><path d="M1.500 6.500h11v4h-11z" fill="#fff" stroke="#4f5866" /></svg>
            </ControlButton>
            <ControlButton type="button" aria-label="Развернуть">
              <svg width="14" height="14" fill="#fff" stroke="#4f5866">
                <path d="M4.500 1.500h8v8h-8z" />
                <path d="M1.500 3.500h8v8h-8z" />
                <path d="M4.500 6.500h2v2h-2z" fill="#9fb0c4" />
              </svg>
            </ControlButton>
            <ControlButton type="button" aria-label="Закрыть" $close>
              <svg width="14" height="12">
                <path d="M1.500 1.500h3.500l2 2.500 2-2.500h3.500L9 6l3.500 4.500H9L7 8l-2 2.500H1.500L5 6z" fill="#fff" stroke="#5c3a38" />
              </svg>
            </ControlButton>
          </Controls>
        </TitleBar>

        <MenuBar>
          {menus.map((m) => <MenuLabel key={m} text={m} />)}
          <CloseDoc type="button" aria-label="Закрыть документ">
            <svg width="9" height="9"><path d="m1 1 7 7M8 1 1 8" stroke="#5a6270" strokeWidth="2" /></svg>
          </CloseDoc>
        </MenuBar>

        <ToolArea>
          <ToolRow>
            <Grip />
            <ToolItems items={standardTools} />
            <Overflow type="button" aria-label="Ещё" />
          </ToolRow>
          <ToolRow>
            <Grip />
            <ToolItems items={[["Стили", StylesIcon]]} />
            <Combo $w={158} $gap={9}>
              <ComboSelect aria-label="Шрифт"><option>Calibri</option></ComboSelect>
            </Combo>
            <Combo $w={63} $gap={8}>
              <ComboSelect aria-label="Размер"><option>11</option></ComboSelect>
            </Combo>
            <FormatGroup>
              <ToolItems items={formatTools} />
            </FormatGroup>
            <Overflow type="button" aria-label="Ещё" />
          </ToolRow>
        </ToolArea>

        <FormulaBar>
          <Combo $w={126}>
            <ComboSelect aria-label="Имя ячейки"><option>J48</option></ComboSelect>
          </Combo>
          <FormulaTools>
            <ToolItems items={[["Мастер функций", FxIcon], ["Сумма", SumIcon], ["Функция", EqualsIcon]]} />
          </FormulaTools>
          <FormulaInput aria-label="Строка ввода" />
        </FormulaBar>

        <SheetArea>
          <Viewport>
            <Grid>
              <colgroup>
                <col style={{ width: 34 }} />
                {columns.map(([name, w]) => <col key={name} style={{ width: w }} />)}
              </colgroup>
              <thead>
                <tr>
                  <ColHead aria-label="Все ячейки" />
                  {columns.map(([name]) => (
                    <ColHead key={name} scope="col" $active={name === "J"}>{name}</ColHead>
                  ))}
                </tr>
              </thead>
              <tbody>
                {ROWS.map((row) => <DataRow key={row.n} row={row} />)}
                {TAIL.map((row) => (
                  <tr key={row.n} style={{ height: 19 }}>
                    <RowHead scope="row" $active={row.n === 48}>{row.n}</RowHead>
                    <Cell $right={row.yellow} />
                    <Cell
                      $align="left"
                      $bg={row.yellow}
                      $right={row.yellow}
                      $bottom={row.yellow}
                      $bold={row.bold}
                      $thick={row.n === 46 ? "t" : ""}
                    >
                      {row.label}
                    </Cell>
                    <Cell $align="left">{row.norm}</Cell>
                    {valueColumns.map((name, i) =>
                      row.n === 48 && name === "J" ? (
                        <ActiveCell key={name}><Cursor /></ActiveCell>
                      ) : (
                        <Cell key={name} $align="right" $thick={row.n === 46 ? "t" : ""}>{row.vals[i]}</Cell>
                      )
                    )}
                  </tr>
                ))}
              </tbody>
            </Grid>
          </Viewport>
          <VScroll>
            <ScrollArrow type="button" aria-label="Вверх" $dir="up" />
            <VTrack><Thumb $v /></VTrack>
            <ScrollArrow type="button" aria-label="Вниз" $dir="down" />
          </VScroll>
        </SheetArea>

        <TabBar>
          <TabZone>
            {navPaths.map((d, i) => (
              <NavButton key={d} type="button" aria-label={navNames[i]}>
                <svg width="10" height="9"><path d={d} fill="#a5a5a5" stroke="#a5a5a5" /></svg>
              </NavButton>
            ))}
            <Tabs>
              <SheetTab w={46} active>Лист1</SheetTab>
              <SheetTab w={44}>Лист2</SheetTab>
              <SheetTab w={44}>Лист3</SheetTab>
              <SheetTab w={22} label="Добавить лист">
                <svg width="12" height="12" viewBox="0 0 12 12" aria-hidden="true">
                  <path d="M4.500 1.500h3v3h3v3h-3v3h-3v-3h-3v-3h3z" fill="#7ac943" stroke="#3d8a14" />
                </svg>
              </SheetTab>
            </Tabs>
          </TabZone>
          <Splitter />
          <HScroll>
            <ScrollArrow type="button" aria-label="Влево" $dir="left" />
            <HTrack><Thumb /></HTrack>
            <ScrollArrow type="button" aria-label="Вправо" $dir="right" />
          </HScroll>
        </TabBar>

        <StatusBar>
          <StatusCell $w={320} $pad={4}>Лист 4 / 6</StatusCell>
          <StatusCell $w={351} $pad={4}>PageStyle_Лист1</StatusCell>
          <StatusCell $w={49} />
          <StatusCell $w={42}>СТАНД</StatusCell>
          <StatusCell $w={26}>
            <svg width="13" height="14" aria-hidden="true">
              <path d="M1.500.5h7l3 3v10h-10z" fill="#fff" stroke="#8c8c8c" />
              <path d="M4 2h3l-.5 6h-2zM4.500 9.500h2v2h-2z" fill="#e8761a" />
            </svg>
          </StatusCell>
          <StatusCell $w={24} />
          <StatusCell>Сумма=0</StatusCell>
          <StatusCell $w={148}>
            <ZoomButton type="button" aria-label="Уменьшить">{zoomIcon(false)}</ZoomButton>
            <ZoomRange type="range" aria-label="Масштаб" defaultValue={48} />
            <ZoomButton type="button" aria-label="Увеличить">{zoomIcon(true)}</ZoomButton>
          </StatusCell>
          <StatusCell $w={37}>100%</StatusCell>
        </StatusBar>
        <TaskbarEdge />
      </Window>
    </Desktop>
  );
}
